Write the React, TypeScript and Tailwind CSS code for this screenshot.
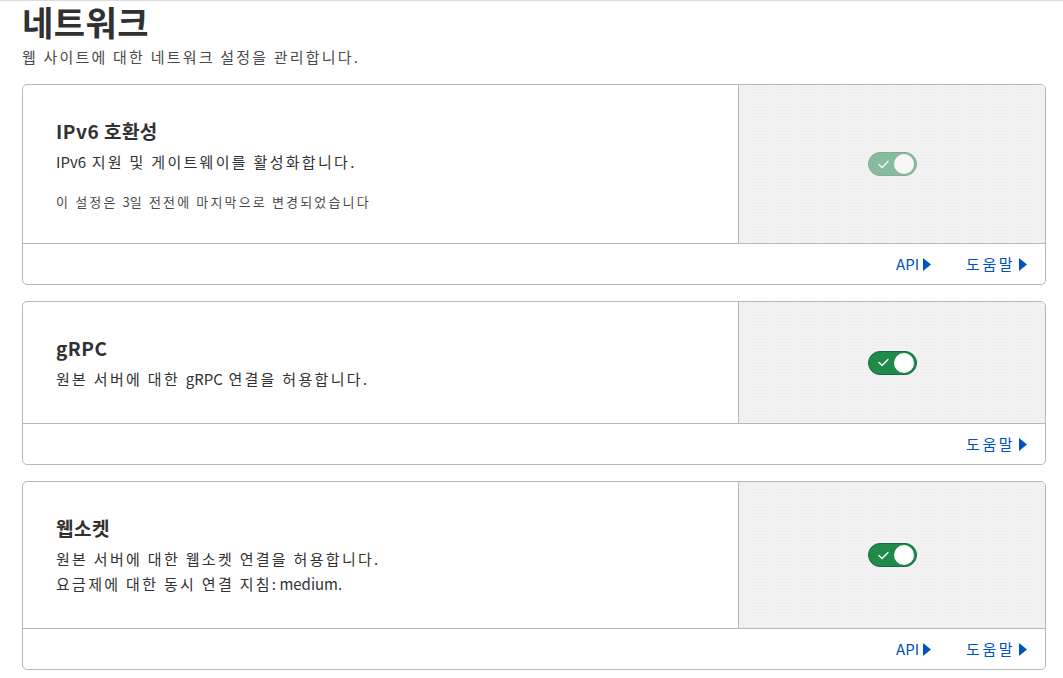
import React from 'react';

type Setting = {
  title: string;
  lines: string[];
  note?: string;
  faded?: boolean;
  links: string[];
};

const settings: Setting[] = [
  {
    title: 'IPv6 호환성',
    lines: ['IPv6 지원 및 게이트웨이를 활성화합니다.'],
    note: '이 설정은 3일 전전에 마지막으로 변경되었습니다',
    faded: true,
    links: ['API', '도움말'],
  },
  {
    title: 'gRPC',
    lines: ['원본 서버에 대한 gRPC 연결을 허용합니다.'],
    links: ['도움말'],
  },
  {
    title: '웹소켓',
    lines: ['원본 서버에 대한 웹소켓 연결을 허용합니다.', '요금제에 대한 동시 연결 지침: medium.'],
    links: ['API', '도움말'],
  },
];

// Hangul runs are spaced a little wider than Latin runs, as in the original
function Ko({ text, wide = 'tracking-[2.3px]' }: { text: string; wide?: string }) {
  const parts = text.split(/([\uAC00-\uD7A3\s]+)/).filter(Boolean);
  return (
    <>
      {parts.map((p, i) =>
        /[\uAC00-\uD7A3]/.test(p) ? (
          <span key={i} className={wide}>
            {p}
          </span>
        ) : (
          <span key={i}>{p}</span>
        ),
      )}
    </>
  );
}

function Toggle({ faded }: { faded?: boolean }) {
  return (
    <div className={`flex h-[24px] w-[49px] items-center justify-between rounded-full border border-[#17693a] bg-[#1f8a4c] pl-[9px] pr-[2px] ${faded ? 'opacity-50' : ''}`}>
      <svg width="11" height="9" viewBox="0 0 11 9" fill="none">
        <path d="M1 4.5l3 3L10 1.5" stroke="#fff" strokeWidth="1.4" strokeLinecap="round" strokeLinejoin="round" />
      </svg>
      <div className="h-[20px] w-[20px] rounded-full bg-white" />
    </div>
  );
}

function Card({ s }: { s: Setting }) {
  return (
    <div className="overflow-hidden rounded-[5px] border border-[#b8b8b8] bg-white">
      <div className="flex border-b border-[#b8b8b8]">
        <div className="flex-1 px-[33px] pb-[32px] pt-[33px]">
          <h2 className="text-[19px] font-bold leading-[26px] tracking-[0.5px] text-[#313131]">{s.title}</h2>
          <div className="mt-[5px] text-[15px] leading-[25px] text-[#313131]">
            {s.lines.map((l) => (
              <p key={l}>
                <Ko text={l} />
              </p>
            ))}
          </div>
          {s.note && (
            <p className="mt-[19px] text-[13px] leading-[18px] text-[#4a4a4a]">
              <Ko text={s.note} wide="tracking-[2.15px]" />
            </p>
          )}
        </div>
        <div className="flex w-[307px] items-center justify-center border-l border-[#b8b8b8] bg-[#f2f2f2] bg-[radial-gradient(#e9e9e9_0.5px,transparent_0.5px)] bg-[length:3px_3px]">
          <Toggle faded={s.faded} />
        </div>
      </div>
      <div className="flex h-[40px] items-center justify-end gap-[35px] pr-[18px]">
        {s.links.map((l) => (
          <a key={l} className="flex items-center gap-[4px] text-[15px] text-[#0051c3]">
            <span>
              <Ko text={l} wide="tracking-[2.5px]" />
            </span>
            <svg width="8" height="13" viewBox="0 0 8 13">
              <path d="M0 0L8 6.5L0 13Z" fill="#0051c3" />
            </svg>
          </a>
        ))}
      </div>
    </div>
  );
}

export default function App() {
  return (
    <div className="min-h-screen border-t border-[#dcdcdc] bg-white pl-[22px] pr-[17px] font-['Noto_Sans_CJK_KR','Noto_Sans',sans-serif]">
      <h1 className="pt-[1px] text-[34px] font-bold leading-[39px] tracking-[0.5px] text-[#313131]">네트워크</h1>
      <p className="mt-[6px] text-[15px] leading-[20px] text-[#4a4a4a]">
        <Ko text="웹 사이트에 대한 네트워크 설정을 관리합니다." wide="tracking-[2.2px]" />
      </p>
      <div className="mt-[17px] flex flex-col gap-[16px]">
        {settings.map((s) => (
          <Card key={s.title} s={s} />
        ))}
      </div>
    </div>
  );
}
